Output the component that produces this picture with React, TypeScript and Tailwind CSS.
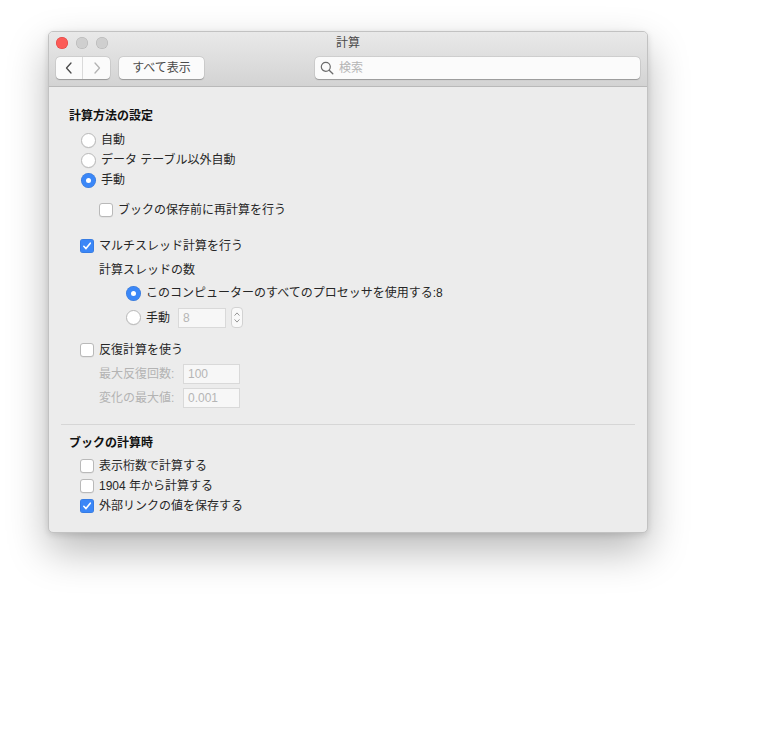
import React from "react";

function Check() {
  return (
    <svg width="10" height="10" viewBox="0 0 10 10" fill="none">
      <path d="M1.8 5.3 L4 7.6 L8.3 2.2" stroke="white" strokeWidth="1.6" strokeLinecap="round" strokeLinejoin="round" />
    </svg>
  );
}

function Checkbox({ checked, label, disabled }: { checked?: boolean; label: string; disabled?: boolean }) {
  return (
    <div className="flex h-[20px] items-center gap-[5px]">
      {checked ? (
        <span className="flex h-[14px] w-[14px] items-center justify-center rounded-[3px] bg-[#3b87f7] shadow-[inset_0_0_0_0.5px_rgba(0,0,0,0.15)]">
          <Check />
        </span>
      ) : (
        <span className="h-[14px] w-[14px] rounded-[3px] border border-[#b9b9b9] bg-white shadow-[0_0.5px_0.5px_rgba(0,0,0,0.08)]" />
      )}
      <span className={disabled ? "text-[#b3b3b3]" : "text-[#262626]"}>{label}</span>
    </div>
  );
}

function Radio({ checked, label }: { checked?: boolean; label: string }) {
  return (
    <div className="flex h-[20px] items-center gap-[5px]">
      {checked ? (
        <span className="flex h-[15px] w-[15px] items-center justify-center rounded-full bg-[#3b87f7] shadow-[inset_0_0_0_0.5px_rgba(0,0,0,0.15)]">
          <span className="h-[5px] w-[5px] rounded-full bg-white" />
        </span>
      ) : (
        <span className="h-[15px] w-[15px] rounded-full border border-[#b9b9b9] bg-white shadow-[0_0.5px_0.5px_rgba(0,0,0,0.08)]" />
      )}
      <span className="text-[#262626]">{label}</span>
    </div>
  );
}

function DisabledInput({ value, w }: { value: string; w: string }) {
  return (
    <div className={`flex h-[20px] items-center border border-[#d9d9d9] bg-[#f7f7f7] pl-[4px] text-[#b5b5b5] ${w}`}>
      {value}
    </div>
  );
}

export default function App() {
  return (
    <div className="min-h-[752px] w-[768px] bg-white pl-[48px] pt-[31px] font-['Liberation_Sans','Noto_Sans_CJK_JP',sans-serif] text-[12px] leading-[20px]">
      <div className="w-[600px] overflow-hidden rounded-[5px] border border-[#c2c2c2] bg-[#ececec] shadow-[0_18px_40px_rgba(0,0,0,0.28),0_2px_6px_rgba(0,0,0,0.12)]">
        {/* Title bar */}
        <div className="h-[55px] border-b border-[#b9b9b9] bg-gradient-to-b from-[#e9e9e9] to-[#d3d3d3] px-[7px]">
          <div className="grid h-[21px] grid-cols-[1fr_auto_1fr] items-center">
            <div className="flex items-center gap-[8px]">
              <span className="h-[12px] w-[12px] rounded-full bg-[#fc5b57] shadow-[inset_0_0_0_0.5px_rgba(200,40,40,0.6)]" />
              <span className="h-[12px] w-[12px] rounded-full bg-[#cfcfcf] shadow-[inset_0_0_0_0.5px_rgba(0,0,0,0.15)]" />
              <span className="h-[12px] w-[12px] rounded-full bg-[#cfcfcf] shadow-[inset_0_0_0_0.5px_rgba(0,0,0,0.15)]" />
            </div>
            <div className="text-[12px] text-[#4a4a4a]">計算</div>
            <div />
          </div>
          <div className="mt-[4px] flex h-[22px] items-center">
            <div className="flex h-[22px] w-[54px] rounded-[4px] bg-[#fbfbfb] shadow-[0_0.5px_1px_rgba(0,0,0,0.25),0_0_0_0.5px_rgba(0,0,0,0.1)]">
              <div className="flex w-[27px] items-center justify-center border-r border-[#dadada]">
                <svg width="8" height="12" viewBox="0 0 8 12" fill="none">
                  <path d="M6 1 L1.5 6 L6 11" stroke="#4a4a4a" strokeWidth="1.3" strokeLinecap="round" strokeLinejoin="round" />
                </svg>
              </div>
              <div className="flex w-[27px] items-center justify-center">
                <svg width="8" height="12" viewBox="0 0 8 12" fill="none">
                  <path d="M2 1 L6.5 6 L2 11" stroke="#b3b3b3" strokeWidth="1.3" strokeLinecap="round" strokeLinejoin="round" />
                </svg>
              </div>
            </div>
            <div className="ml-[9px] flex h-[22px] w-[85px] items-center justify-center rounded-[4px] bg-[#fbfbfb] text-[#4a4a4a] shadow-[0_0.5px_1px_rgba(0,0,0,0.25),0_0_0_0.5px_rgba(0,0,0,0.1)]">
              すべて表示
            </div>
            <div className="ml-auto flex h-[22px] w-[325px] items-center gap-[5px] rounded-[4px] bg-[#fbfbfb] pl-[5px] text-[#b5b5b5] shadow-[0_0.5px_1px_rgba(0,0,0,0.25),0_0_0_0.5px_rgba(0,0,0,0.1)]">
              <svg width="14" height="14" viewBox="0 0 14 14" fill="none">
                <circle cx="5.8" cy="5.8" r="4.5" stroke="#6b6b6b" strokeWidth="1.2" />
                <path d="M9.2 9.2 L12.8 12.8" stroke="#6b6b6b" strokeWidth="1.3" strokeLinecap="round" />
              </svg>
              <span>検索</span>
            </div>
          </div>
        </div>

        {/* Content */}
        <div className="px-[20px] pb-[16px] pt-[19px]">
          <div className="h-[20px] font-bold text-[#111]">計算方法の設定</div>
          <div className="mt-[4px] pl-[12px]">
            <Radio label="自動" />
            <Radio label="データ テーブル以外自動" />
            <Radio label="手動" checked />
          </div>
          <div className="mt-[10px] pl-[30px]">
            <Checkbox label="ブックの保存前に再計算を行う" />
          </div>
          <div className="mt-[16px] pl-[11px]">
            <Checkbox label="マルチスレッド計算を行う" checked />
          </div>
          <div className="mt-[4px] h-[20px] pl-[30px] text-[#262626]">計算スレッドの数</div>
          <div className="mt-[3px] pl-[57px]">
            <Radio label="このコンピューターのすべてのプロセッサを使用する:8" checked />
          </div>
          <div className="mt-[4px] flex items-center pl-[57px]">
            <Radio label="手動" />
            <div className="ml-[8px]">
              <DisabledInput value="8" w="w-[48px]" />
            </div>
            <div className="ml-[5px] flex h-[21px] w-[12px] flex-col items-center justify-center gap-[3px] rounded-[4px] border border-[#d2d2d2] bg-[#f9f9f9]">
              <svg width="6" height="4" viewBox="0 0 6 4" fill="none">
                <path d="M0.8 3.3 L3 0.9 L5.2 3.3" stroke="#8a8a8a" strokeWidth="0.9" strokeLinecap="round" strokeLinejoin="round" />
              </svg>
              <svg width="6" height="4" viewBox="0 0 6 4" fill="none">
                <path d="M0.8 0.7 L3 3.1 L5.2 0.7" stroke="#8a8a8a" strokeWidth="0.9" strokeLinecap="round" strokeLinejoin="round" />
              </svg>
            </div>
          </div>
          <div className="mt-[12px] pl-[11px]">
            <Checkbox label="反復計算を使う" />
          </div>
          <div className="mt-[4px] flex items-center pl-[30px]">
            <span className="w-[84px] text-[#b3b3b3]">最大反復回数:</span>
            <DisabledInput value="100" w="w-[57px]" />
          </div>
          <div className="mt-[4px] flex items-center pl-[30px]">
            <span className="w-[84px] text-[#b3b3b3]">変化の最大値:</span>
            <DisabledInput value="0.001" w="w-[57px]" />
          </div>
          <div className="-mx-[8px] mt-[16px] h-px bg-[#d6d6d6]" />
          <div className="mt-[8px] h-[20px] font-bold text-[#111]">ブックの計算時</div>
          <div className="mt-[3px] pl-[11px]">
            <Checkbox label="表示桁数で計算する" />
            <Checkbox label="1904 年から計算する" />
            <Checkbox label="外部リンクの値を保存する" checked />
          </div>
        </div>
      </div>
    </div>
  );
}
